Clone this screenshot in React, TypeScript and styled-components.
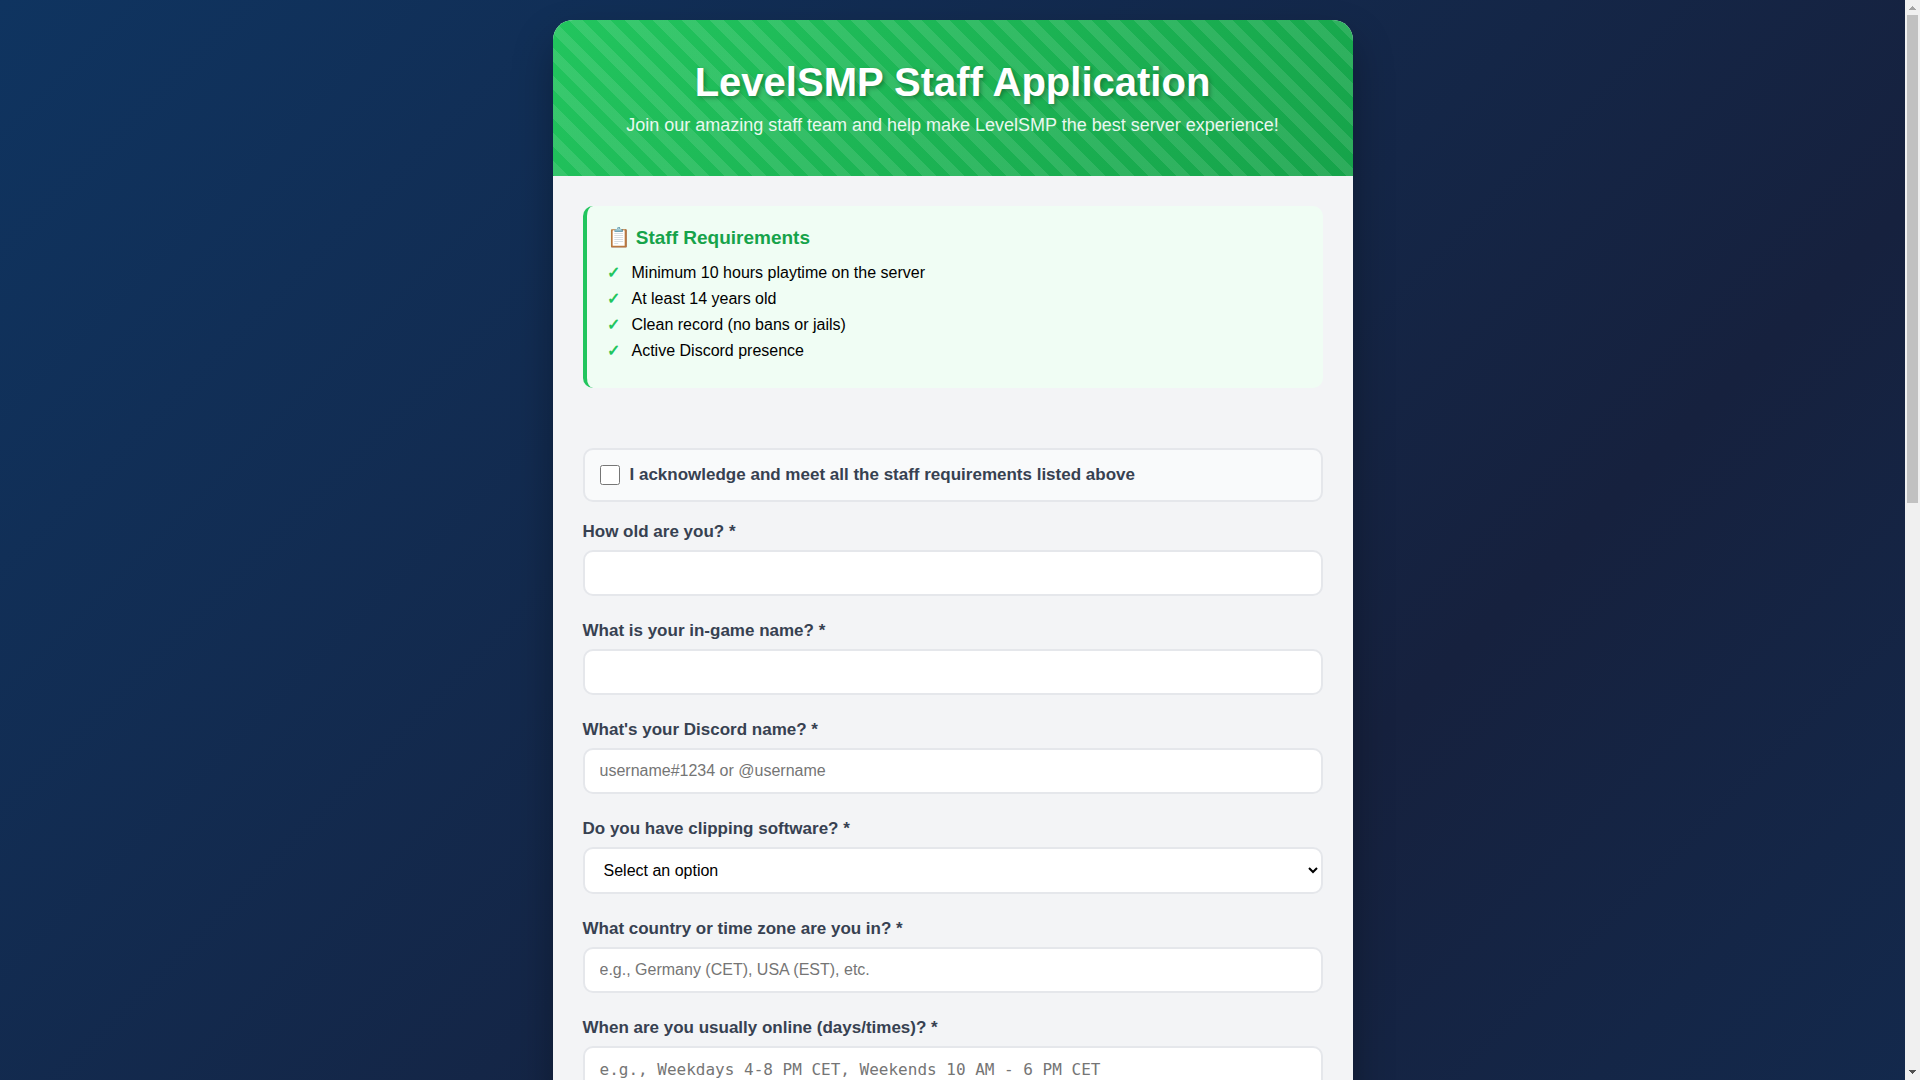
import React, { useLayoutEffect, useRef, useState } from "react";
import styled, { createGlobalStyle } from "styled-components";

const GlobalStyle = createGlobalStyle`
  * { box-sizing: border-box; }
  html, body, #root { height: 100%; }
  body {
    margin: 0;
    overflow: hidden;
    font-family: "Liberation Sans", Arial, sans-serif;
    color: #000;
  }
`;

const Shell = styled.div`
  display: flex;
  height: 100%;
`;

const Scroller = styled.div`
  flex: 1;
  min-width: 0;
  overflow-y: auto;
  scrollbar-width: none;
`;

const ScrollBar = styled.div`
  display: flex;
  flex-direction: column;
  flex: none;
  width: 15px;
  background: #f0f0f0;
`;

const ScrollTrack = styled.div`
  flex: 1;
  min-height: 0;
  padding: 0 2px;
`;

const ScrollThumb = styled.div`
  background: #c1c1c1;
`;

const ScrollArrow = styled.svg<{ $dim?: boolean }>`
  flex: none;
  display: block;
  width: 15px;
  height: 15px;
  fill: ${(p) => (p.$dim ? "#a3a3a3" : "#505050")};
`;

const Page = styled.div`
  display: flex;
  justify-content: center;
  align-items: stretch;
  min-height: 215vh;
  padding: 20px;
  background: linear-gradient(135deg, #0f3460 0%, #16213e 50%, #0f3460 100%);
`;

const Card = styled.main`
  width: 100%;
  max-width: 800px;
  overflow: hidden;
  border-radius: 20px;
  background: #f3f4f6;
  box-shadow: 0 20px 40px rgba(0, 0, 0, 0.3);
`;

const Header = styled.header`
  padding: 40px;
  text-align: center;
  color: #fff;
  background:
    repeating-linear-gradient(
      45deg,
      transparent 0,
      transparent 1px,
      rgba(255, 255, 255, 0.1) 1px,
      rgba(255, 255, 255, 0.1) 11px,
      transparent 11px,
      transparent 20px
    ),
    linear-gradient(135deg, #22c55e, #16a34a);
`;

const Title = styled.h1`
  margin: 0 0 10px;
  font-size: 40px;
  line-height: 44px;
  text-shadow: 2px 2px 4px rgba(0, 0, 0, 0.3);
`;

const Tagline = styled.p`
  margin: 0;
  font-size: 18px;
  line-height: 22px;
  opacity: 0.9;
`;

const Content = styled.div`
  padding: 30px;
`;

const Requirements = styled.section`
  margin-bottom: 60px;
  padding: 20px;
  border-left: 4px solid #22c55e;
  border-radius: 10px;
  background: #f0fdf4;
`;

const RequirementsTitle = styled.h2`
  margin: 0 0 15px;
  font-size: 19px;
  line-height: 23px;
  color: #16a34a;
`;

const RequirementList = styled.ul`
  display: flex;
  flex-direction: column;
  gap: 8px;
  margin: 0;
  padding: 0 0 8px;
  list-style: none;
`;

const Requirement = styled.li`
  display: grid;
  grid-template-columns: 25px 1fr;
  font-size: 16px;
  line-height: 18px;

  &::before {
    content: "✓";
    font-weight: bold;
    color: #22c55e;
  }
`;

const Acknowledge = styled.label`
  display: flex;
  align-items: center;
  gap: 10px;
  margin-bottom: 20px;
  padding: 15px;
  border: 2px solid #e5e7eb;
  border-radius: 10px;
  background: #f9fafb;
  font-size: 17px;
  font-weight: bold;
  line-height: 20px;
  color: #374151;
`;

const Checkbox = styled.input`
  width: 20px;
  height: 20px;
  margin: 0;
`;

const Field = styled.div`
  display: flex;
  flex-direction: column;
  gap: 8px;
  margin-bottom: 25px;
`;

const FieldLabel = styled.label`
  font-size: 17px;
  font-weight: bold;
  line-height: 20px;
  color: #374151;
`;

const TextBox = styled.input`
  width: 100%;
  height: 46px;
  padding: 12px 15px;
  border: 2px solid #e5e7eb;
  border-radius: 10px;
  background: #fff;
  font-family: inherit;
  font-size: 16px;
`;

const Select = styled.select`
  width: 100%;
  height: 47px;
  padding: 12px 15px;
  border: 2px solid #e5e7eb;
  border-radius: 10px;
  background: #fff;
  font-family: inherit;
  font-size: 16px;
  color: #000;
`;

const TextArea = styled.textarea`
  width: 100%;
  min-height: 100px;
  padding: 12px 15px;
  border: 2px solid #e5e7eb;
  border-radius: 10px;
  background: #fff;
  font-family: "DejaVu Sans Mono", monospace;
  font-size: 16px;
  resize: vertical;
`;

const requirements = [
  "Minimum 10 hours playtime on the server",
  "At least 14 years old",
  "Clean record (no bans or jails)",
  "Active Discord presence",
];

export default function App() {
  const scroller = useRef<HTMLDivElement>(null);
  const [thumb, setThumb] = useState({ size: 1, start: 0 });

  const measure = () => {
    const el = scroller.current;
    if (!el) return;
    setThumb({
      size: el.clientHeight / el.scrollHeight,
      start: el.scrollTop / el.clientHeight,
    });
  };

  useLayoutEffect(() => {
    measure();
    window.addEventListener("resize", measure);
    return () => window.removeEventListener("resize", measure);
  }, []);

  return (
    <>
      <GlobalStyle />
      <Shell>
        <Scroller ref={scroller} onScroll={measure}>
          <Page>
            <Card>
              <Header>
                <Title>LevelSMP Staff Application</Title>
                <Tagline>Join our amazing staff team and help make LevelSMP the best server experience!</Tagline>
              </Header>
              <Content>
                <Requirements>
                  <RequirementsTitle>📋 Staff Requirements</RequirementsTitle>
                  <RequirementList>
                    {requirements.map((text) => (
                      <Requirement key={text}>{text}</Requirement>
                    ))}
                  </RequirementList>
                </Requirements>
                <form>
                  <Acknowledge htmlFor="acknowledge">
                    <Checkbox type="checkbox" id="acknowledge" required />
                    I acknowledge and meet all the staff requirements listed above
                  </Acknowledge>
                  <Field>
                    <FieldLabel htmlFor="age">How old are you? *</FieldLabel>
                    <TextBox id="age" type="number" required />
                  </Field>
                  <Field>
                    <FieldLabel htmlFor="ign">What is your in-game name? *</FieldLabel>
                    <TextBox id="ign" type="text" required />
                  </Field>
                  <Field>
                    <FieldLabel htmlFor="discord">What's your Discord name? *</FieldLabel>
                    <TextBox id="discord" type="text" placeholder="username#1234 or @username" required />
                  </Field>
                  <Field>
                    <FieldLabel htmlFor="clipping">Do you have clipping software? *</FieldLabel>
                    <Select id="clipping" required>
                      <option value="">Select an option</option>
                      <option value="yes">Yes</option>
                      <option value="no">No</option>
                    </Select>
                  </Field>
                  <Field>
                    <FieldLabel htmlFor="country">What country or time zone are you in? *</FieldLabel>
                    <TextBox id="country" type="text" placeholder="e.g., Germany (CET), USA (EST), etc." required />
                  </Field>
                  <Field>
                    <FieldLabel htmlFor="online">When are you usually online (days/times)? *</FieldLabel>
                    <TextArea id="online" placeholder="e.g., Weekdays 4-8 PM CET, Weekends 10 AM - 6 PM CET" required />
                  </Field>
                </form>
              </Content>
            </Card>
          </Page>
        </Scroller>
        <ScrollBar aria-hidden="true">
          <ScrollArrow viewBox="0 0 15 15" shapeRendering="crispEdges" $dim={thumb.start === 0}>
            <path d="M7 6h1v1h1v1h1v1h1v1H4V9h1V8h1V7h1z" />
          </ScrollArrow>
          <ScrollTrack>
            <ScrollThumb
              style={{ height: `${thumb.size * 100}%`, transform: `translateY(${thumb.start * 100}%)` }}
            />
          </ScrollTrack>
          <ScrollArrow viewBox="0 0 15 15" shapeRendering="crispEdges">
            <path d="M4 5h7v1h-1v1H9v1H8v1H7V8H6V7H5V6H4z" />
          </ScrollArrow>
        </ScrollBar>
      </Shell>
    </>
  );
}
